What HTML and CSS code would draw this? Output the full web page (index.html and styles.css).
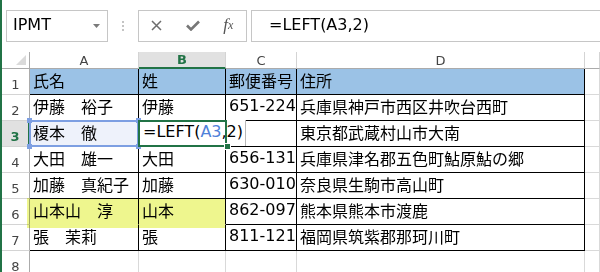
FILE: index.html
```html
<!DOCTYPE html>
<html lang="ja">
<head>
    <meta charset="UTF-8">
    <meta name="viewport" content="width=device-width, initial-scale=1.0">
    <title>Book1 - Excel</title>
    <link rel="stylesheet" href="styles.css">
</head>
<body>
    <div class="app">
        <!-- formula bar -->
        <div class="fbar">
            <div class="namebox">
                <span>IPMT</span>
                <svg class="drop" width="7" height="4" viewBox="0 0 7 4"><path d="M0 0H7L3.5 4Z" fill="#7a7a7a"/></svg>
            </div>
            <div class="grip">
                <svg width="2" height="10" viewBox="0 0 2 10"><circle cx="1" cy="1" r="1" fill="#b0b0b0"/><circle cx="1" cy="5" r="1" fill="#b0b0b0"/><circle cx="1" cy="9" r="1" fill="#b0b0b0"/></svg>
            </div>
            <div class="btns">
                <div class="btn">
                    <svg width="11" height="11" viewBox="0 0 11 11"><path d="M1 1L10 10M10 1L1 10" stroke="#6d6d6d" stroke-width="1.5" fill="none"/></svg>
                </div>
                <div class="btn">
                    <svg width="14" height="11" viewBox="0 0 14 11"><path d="M1 5.5L5 9.5L13 1.5" stroke="#777" stroke-width="2.6" fill="none"/></svg>
                </div>
                <div class="btn fx"><i>f</i><sub>x</sub></div>
            </div>
            <div class="formula">=LEFT(A3,2)</div>
        </div>

        <!-- sheet -->
        <div class="sheet">
            <div class="corner"><span class="tri"></span></div>
            <div class="ch">A</div>
            <div class="ch sel">B</div>
            <div class="ch">C</div>
            <div class="ch">D</div>
            <div class="ch"></div>

            <div class="rh">1</div>
            <div class="c t hd">氏名</div>
            <div class="c t hd">姓</div>
            <div class="c t hd">郵便番号</div>
            <div class="c t hd">住所</div>
            <div class="c"></div>

            <div class="rh">2</div>
            <div class="c t">伊藤　裕子</div>
            <div class="c t">伊藤</div>
            <div class="c t">651-224</div>
            <div class="c t">兵庫県神戸市西区井吹台西町</div>
            <div class="c"></div>

            <div class="rh sel">3</div>
            <div class="c t ref">榎本　徹
                <span class="hdl tl"></span><span class="hdl tr"></span><span class="hdl bl"></span><span class="hdl br"></span>
            </div>
            <div class="c t act"><span class="edit">=LEFT(<span class="refc">A3</span>,2)</span><span class="fill"></span></div>
            <div class="c t"></div>
            <div class="c t">東京都武蔵村山市大南</div>
            <div class="c"></div>

            <div class="rh">4</div>
            <div class="c t">大田　雄一</div>
            <div class="c t">大田</div>
            <div class="c t">656-131</div>
            <div class="c t">兵庫県津名郡五色町鮎原鮎の郷</div>
            <div class="c"></div>

            <div class="rh">5</div>
            <div class="c t">加藤　真紀子</div>
            <div class="c t">加藤</div>
            <div class="c t">630-010</div>
            <div class="c t">奈良県生駒市高山町</div>
            <div class="c"></div>

            <div class="rh">6</div>
            <div class="c t hl">山本山　淳</div>
            <div class="c t hl">山本</div>
            <div class="c t">862-097</div>
            <div class="c t">熊本県熊本市渡鹿</div>
            <div class="c"></div>

            <div class="rh">7</div>
            <div class="c t">張　茉莉</div>
            <div class="c t">張</div>
            <div class="c t">811-121</div>
            <div class="c t">福岡県筑紫郡那珂川町</div>
            <div class="c"></div>

            <div class="rh">8</div>
            <div class="c"></div>
            <div class="c"></div>
            <div class="c"></div>
            <div class="c"></div>
            <div class="c"></div>

            <!-- marker highlight over A6:B6 -->
            <div class="marker"></div>
        </div>
    </div>
</body>
</html>
```

FILE: styles.css
```css
body {
    margin: 0;
    padding: 0;
    background-color: #ffffff;
    color: #000000;
    font-family: "DejaVu Sans", "Noto Sans CJK JP", sans-serif;
}
.app {
    height: 272px;
    overflow: hidden;
    border-left: 2px solid #217346;
}

/* formula bar */
.fbar {
    display: flex;
    height: 32px;
    padding: 10px 0 10px 4px;
}
.namebox {
    width: 102px;
    box-sizing: border-box;
    border: 1px solid #c6c6c6;
    display: flex;
    align-items: center;
    justify-content: space-between;
    padding: 0 7px 0 6px;
    font-size: 16px;
    padding-bottom: 3px;
}
.namebox .drop {
    margin-top: 3px;
}
.grip {
    width: 30px;
    display: flex;
    align-items: center;
    justify-content: center;
    padding-bottom: 1px;
}
.btns {
    width: 109px;
    box-sizing: border-box;
    border: 1px solid #c6c6c6;
    display: flex;
}
.btn {
    flex: 1;
    display: flex;
    align-items: center;
    justify-content: center;
    padding-bottom: 2px;
}
.fx {
    font-family: "Liberation Serif", serif;
    color: #555;
    font-size: 17px;
}
.fx sub {
    font-size: 12px;
    font-style: italic;
    vertical-align: -3px;
}
.formula {
    flex: 1;
    margin-left: 4px;
    border: 1px solid #c6c6c6;
    border-right: none;
    display: flex;
    align-items: center;
    padding: 0 0 3px 17px;
    font-size: 16px;
}

/* sheet grid */
.sheet {
    position: relative;
    display: grid;
    grid-template-columns: 28px 109px 87px 71px 288px 1fr;
    grid-template-rows: 17px repeat(8, 26px);
}
.corner {
    border-right: 1px solid #ababab;
    border-bottom: 1px solid #ababab;
    position: relative;
}
.corner .tri {
    position: absolute;
    right: 3px;
    bottom: 3px;
    width: 0;
    height: 0;
    border-left: 10px solid transparent;
    border-bottom: 10px solid #dadada;
}
.ch {
    border-right: 1px solid #d4d4d4;
    border-bottom: 1px solid #ababab;
    display: flex;
    align-items: center;
    justify-content: center;
    font-size: 13px;
    color: #444;
}
.ch.sel {
    background-color: #e1e1e1;
    color: #217346;
    font-weight: bold;
    border-bottom: 2px solid #217346;
}
.rh {
    border-right: 1px solid #ababab;
    border-bottom: 1px solid #d4d4d4;
    display: flex;
    align-items: flex-end;
    justify-content: center;
    padding-bottom: 2px;
    font-size: 13px;
    color: #444;
}
.rh.sel {
    background-color: #e1e1e1;
    color: #217346;
    font-weight: bold;
    border-right: 2px solid #217346;
}
.c {
    border-right: 1px solid #d9d9d9;
    border-bottom: 1px solid #d9d9d9;
    display: flex;
    align-items: center;
    padding: 0 0 4px 3px;
    font-size: 16px;
    white-space: nowrap;
    overflow: hidden;
}
.c.t {
    border-right-color: #000;
    border-bottom-color: #000;
}
.c.hd {
    background-color: #9bc2e6;
}
.c.hl {
    border-bottom-color: #fff;
}

/* referenced cell A3 */
.ref {
    position: relative;
    overflow: visible;
    background-color: #eef2fb;
}
.ref::after {
    content: "";
    position: absolute;
    left: -1px;
    top: -1px;
    right: -1px;
    bottom: -1px;
    border: 2px solid #7d9fe2;
}
.hdl {
    position: absolute;
    width: 5px;
    height: 5px;
    background-color: #7d9fe2;
    z-index: 1;
}
.hdl.tl { left: -3px; top: -3px; }
.hdl.tr { right: -3px; top: -3px; }
.hdl.bl { left: -3px; bottom: -3px; }
.hdl.br { right: -3px; bottom: -3px; }

/* active cell B3 in edit mode */
.act {
    position: relative;
    overflow: visible;
    z-index: 2;
    padding-left: 0;
    padding-bottom: 0;
    align-items: stretch;
}
.act .edit {
    display: flex;
    align-items: center;
    padding: 0 2px 4px 4px;
    margin-top: -1px;
    background-color: #fff;
    border-right: 1px solid #b8b8b8;
}
.refc {
    color: #4f81d9;
}
.act::after {
    content: "";
    position: absolute;
    left: -1px;
    top: -1px;
    width: 89px;
    bottom: -1px;
    box-sizing: border-box;
    border: 2px solid #217346;
}
.act .fill {
    position: absolute;
    left: 85px;
    bottom: -4px;
    width: 5px;
    height: 5px;
    background-color: #217346;
    border: 1px solid #fff;
    z-index: 1;
}

.marker {
    position: absolute;
    left: 25px;
    top: 146px;
    width: 198px;
    height: 30px;
    background-color: #eef68e;
    mix-blend-mode: multiply;
}
```
